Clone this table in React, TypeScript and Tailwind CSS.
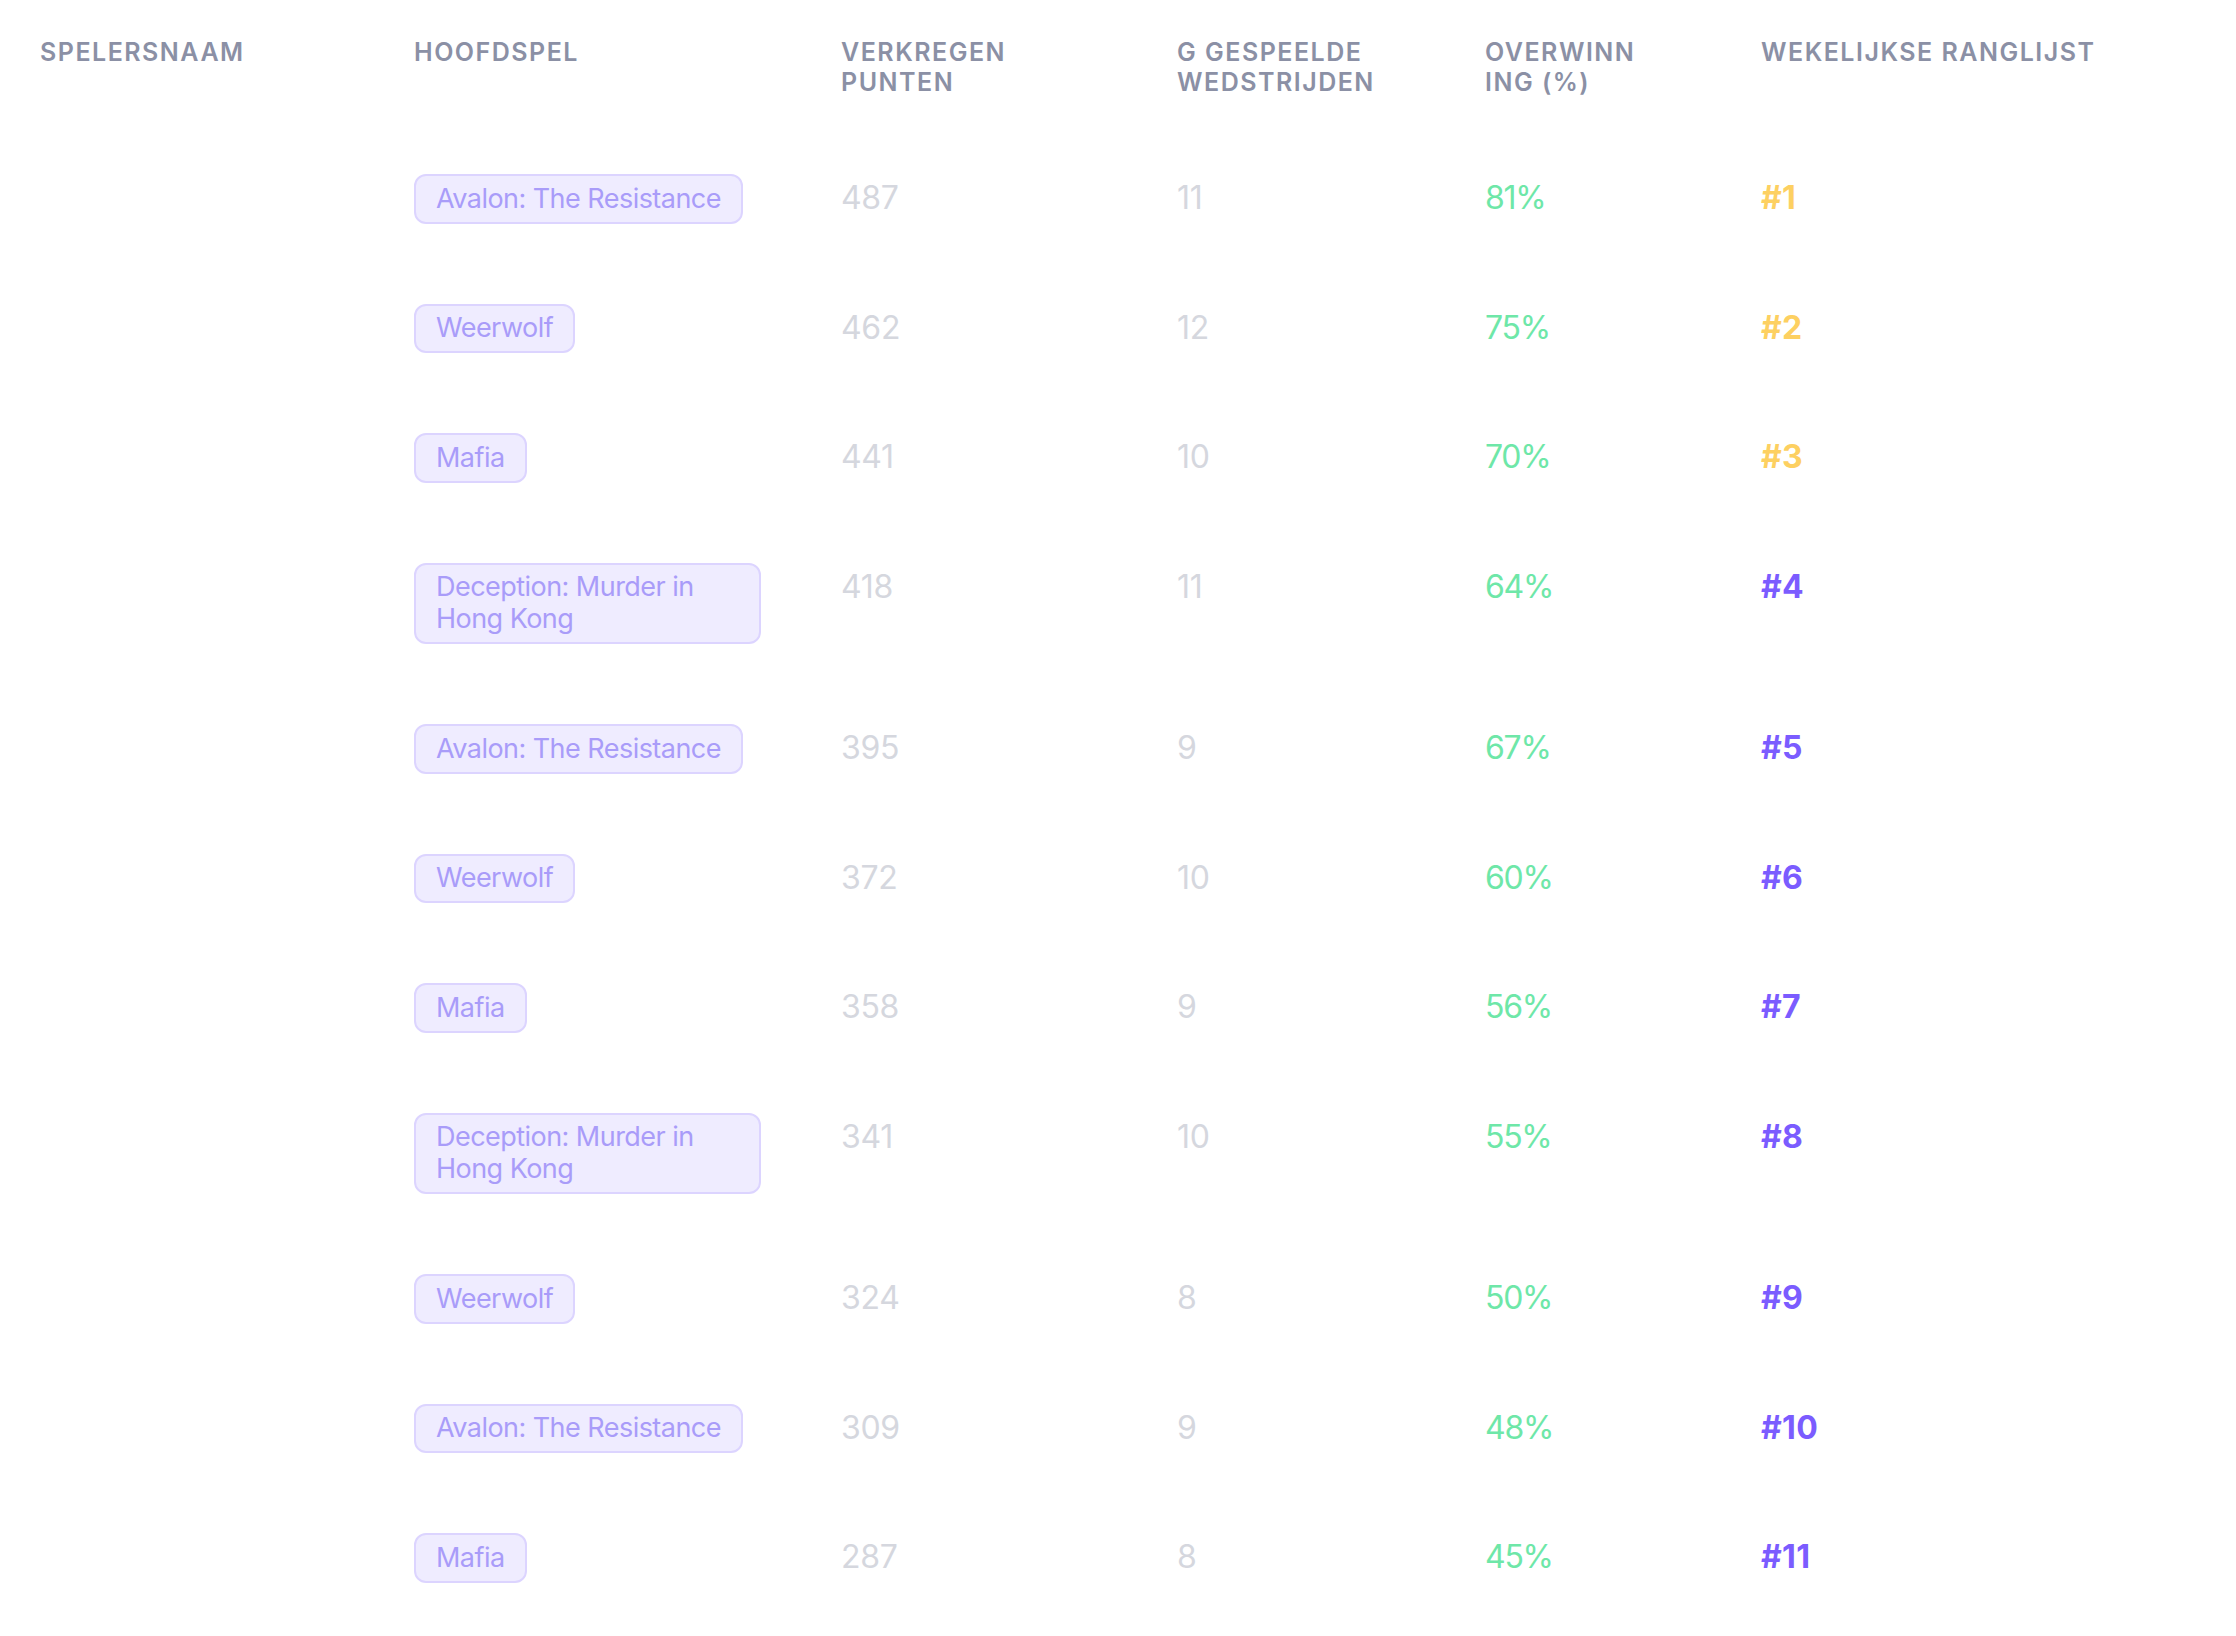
type Row = {
  game: string;
  points: number;
  played: number;
  winRate: number;
  rank: number;
};

const rows: Row[] = [
  { game: 'Avalon: The Resistance', points: 487, played: 11, winRate: 81, rank: 1 },
  { game: 'Weerwolf', points: 462, played: 12, winRate: 75, rank: 2 },
  { game: 'Mafia', points: 441, played: 10, winRate: 70, rank: 3 },
  { game: 'Deception: Murder in Hong Kong', points: 418, played: 11, winRate: 64, rank: 4 },
  { game: 'Avalon: The Resistance', points: 395, played: 9, winRate: 67, rank: 5 },
  { game: 'Weerwolf', points: 372, played: 10, winRate: 60, rank: 6 },
  { game: 'Mafia', points: 358, played: 9, winRate: 56, rank: 7 },
  { game: 'Deception: Murder in Hong Kong', points: 341, played: 10, winRate: 55, rank: 8 },
  { game: 'Weerwolf', points: 324, played: 8, winRate: 50, rank: 9 },
  { game: 'Avalon: The Resistance', points: 309, played: 9, winRate: 48, rank: 10 },
  { game: 'Mafia', points: 287, played: 8, winRate: 45, rank: 11 },
];

const gridCols = 'grid grid-cols-[374px_427px_336px_308px_276px_1fr]';

const HeaderCell = ({ children }: { children: React.ReactNode }) => (
  <div className="px-[40px] text-[25px] leading-[30px] font-semibold uppercase tracking-[0.06em] text-[#8b90a5]">
    {children}
  </div>
);

export default function App() {
  return (
    <div className="min-h-screen bg-white font-['Inter',sans-serif]">
      <div className={`${gridCols} pt-[37px] pb-[37px]`}>
        <HeaderCell>Spelersnaam</HeaderCell>
        <HeaderCell>Hoofdspel</HeaderCell>
        <HeaderCell>
          Verkregen
          <br />
          punten
        </HeaderCell>
        <HeaderCell>
          G gespeelde
          <br />
          wedstrijden
        </HeaderCell>
        <HeaderCell>
          Overwinn
          <br />
          ing (%)
        </HeaderCell>
        <HeaderCell>Wekelijkse ranglijst</HeaderCell>
      </div>

      {rows.map((row) => (
        <div key={row.rank} className={`${gridCols} items-start py-[40px]`}>
          <div className="px-[40px]" />
          <div className="px-[40px]">
            <span className="inline-block rounded-[12px] border-2 border-[#dcd4ff] bg-[#efecff] px-[20px] py-[6.75px] text-[27px] leading-[32px] tracking-[-0.02em] text-[#a99cf9]">
              {row.game}
            </span>
          </div>
          <div className="px-[40px] text-[32px] leading-[48px] tracking-[-0.01em] text-[#d5d7de]">{row.points}</div>
          <div className="px-[40px] text-[32px] leading-[48px] tracking-[-0.01em] text-[#d5d7de]">{row.played}</div>
          <div className="px-[40px] text-[32px] leading-[48px] tracking-[-0.04em] text-[#6ee7a8]">{row.winRate}%</div>
          <div
            className={`px-[40px] text-[32px] leading-[48px] font-bold tracking-[0.01em] ${
              row.rank <= 3 ? 'text-[#fdd061]' : 'text-[#7b5cff]'
            }`}
          >
            #{row.rank}
          </div>
        </div>
      ))}
    </div>
  );
}
